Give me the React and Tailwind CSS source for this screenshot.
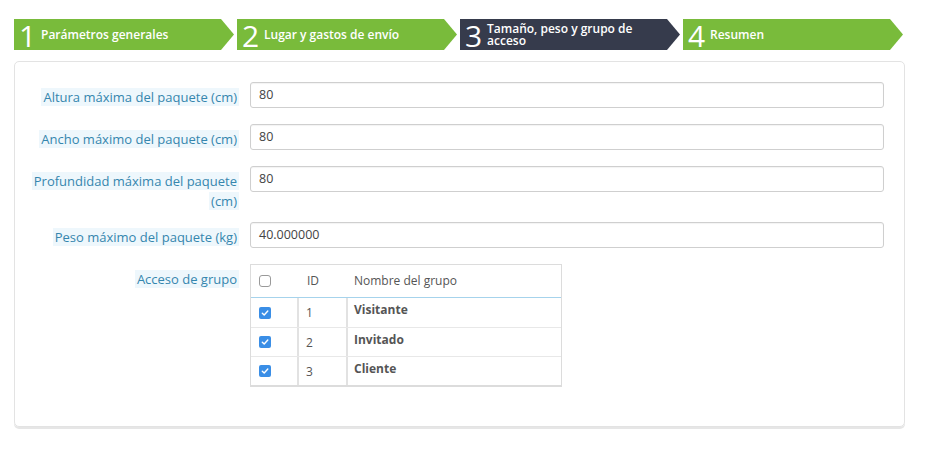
import React from "react";

const steps = [
  { n: "1", t: "Parámetros generales", dark: false },
  { n: "2", t: "Lugar y gastos de envío", dark: false },
  { n: "3", t: "Tamaño, peso y grupo de acceso", dark: true },
  { n: "4", t: "Resumen", dark: false },
];

const arrow = {
  clipPath:
    "polygon(0 0, calc(100% - 13px) 0, 100% 50%, calc(100% - 13px) 100%, 0 100%)",
};

function Step({ n, t, dark }) {
  return (
    <div
      style={arrow}
      className={`flex h-[31px] w-[220px] items-center pl-[5px] text-white ${
        dark ? "bg-[#363b4c]" : "bg-[#79bb3b]"
      }`}
    >
      <span className="mt-[3px] w-[22px] text-[30px] font-normal leading-none">{n}</span>
      <span className="w-[160px] text-[12px] font-semibold leading-[12px]">{t}</span>
    </div>
  );
}

function Label({ children }) {
  return (
    <div className="w-[224px] shrink-0 pl-[12px] pt-[5px] text-right text-[13px] leading-[20px] text-[#3586ae]">
      <span className="bg-[#eef7fc] px-[2px] [box-decoration-break:clone]">{children}</span>
    </div>
  );
}

function Field({ label, value }) {
  return (
    <div className="flex items-start gap-[11px]">
      <Label>{label}</Label>
      <div className="flex h-[26px] w-[634px] items-center rounded-[3px] border border-[#cfcfcf] bg-white pl-[8px] text-[12.5px] text-[#444] shadow-[inset_0_1px_1px_rgba(0,0,0,0.05)]">
        {value}
      </div>
    </div>
  );
}

function Check({ checked }) {
  return checked ? (
    <span className="flex h-[12px] w-[12px] items-center justify-center rounded-[2px] bg-[#3a8ee6]">
      <svg width="8" height="8" viewBox="0 0 8 8">
        <path d="M1.3 4.2 L3.2 6 L6.8 2" fill="none" stroke="white" strokeWidth="1.4" strokeLinecap="round" strokeLinejoin="round" />
      </svg>
    </span>
  ) : (
    <span className="block h-[12px] w-[12px] rounded-[3px] border border-[#9a9a9a] bg-white" />
  );
}

const groups = [
  ["1", "Visitante"],
  ["2", "Invitado"],
  ["3", "Cliente"],
];

export default function App() {
  return (
    <div className="min-h-[451px] w-[926px] bg-white pl-[14px] pt-[19px] font-['Open_Sans',sans-serif]">
      <div className="flex gap-[3px]">
        {steps.map((s) => (
          <Step key={s.n} {...s} />
        ))}
      </div>
      <div className="mt-[11px] h-[366px] w-[891px] rounded-[5px] border border-[#e3e3e3] pt-[20px] shadow-[0_2px_0_#e6e6e6]">
        <div className="flex flex-col gap-[16px]">
          <Field label="Altura máxima del paquete (cm)" value="80" />
          <Field label="Ancho máximo del paquete (cm)" value="80" />
          <div className="h-[40px]">
            <Field label="Profundidad máxima del paquete (cm)" value="80" />
          </div>
          <Field label="Peso máximo del paquete (kg)" value="40.000000" />
          <div className="flex items-start gap-[11px]">
            <Label>Acceso de grupo</Label>
            <div className="w-[312px] border border-[#dcdcdc] border-b-2 text-[12px] text-[#555]">
              <div className="flex h-[33px] items-center border-b border-[#a6d3ec]">
                <div className="flex w-[48px] pl-[8px]"><Check /></div>
                <div className="w-[48px] pl-[8px]">ID</div>
                <div className="pl-[7px]">Nombre del grupo</div>
              </div>
              {groups.map(([id, name], i) => (
                <div key={id} className={`flex h-[29px] ${i > 0 ? "border-t border-[#e8e8e8]" : ""}`}>
                  <div className="flex w-[48px] items-center pl-[8px] border-r-2 border-[#e2e2e2]"><Check checked /></div>
                  <div className="flex w-[49px] items-center pl-[7px] pt-[1px] border-r-2 border-[#e2e2e2]">{id}</div>
                  <div className="pl-[6px] pt-[3px] font-bold">{name}</div>
                </div>
              ))}
            </div>
          </div>
        </div>
      </div>
    </div>
  );
}
